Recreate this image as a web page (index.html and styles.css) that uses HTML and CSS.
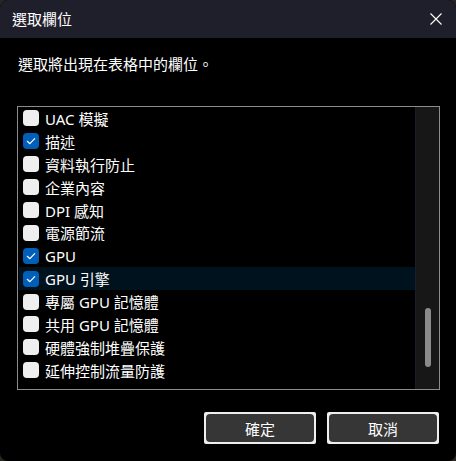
FILE: index.html
```html
<!DOCTYPE html>
<html lang="zh-Hant">

<head>
  <meta charset="UTF-8" />
  <title>選取欄位</title>
  <link rel="stylesheet" href="styles.css">
</head>

<body>
  <div class="dialog">
    <div class="titlebar">
      <span class="title">選取欄位</span>
      <svg class="close" width="12" height="12" viewBox="0 0 12 12">
        <path d="M0.5 0.5 L11.5 11.5 M11.5 0.5 L0.5 11.5" stroke="#ffffff" stroke-width="1.1" fill="none" />
      </svg>
    </div>

    <p class="desc">選取將出現在表格中的欄位。</p>

    <div class="list">
      <ul class="rows">
        <li class="row"><span class="box"></span>UAC 模擬</li>
        <li class="row"><span class="box checked"></span>描述</li>
        <li class="row"><span class="box"></span>資料執行防止</li>
        <li class="row"><span class="box"></span>企業內容</li>
        <li class="row"><span class="box"></span>DPI 感知</li>
        <li class="row"><span class="box"></span>電源節流</li>
        <li class="row"><span class="box checked"></span>GPU</li>
        <li class="row selected"><span class="box checked"></span>GPU 引擎</li>
        <li class="row"><span class="box"></span>專屬 GPU 記憶體</li>
        <li class="row"><span class="box"></span>共用 GPU 記憶體</li>
        <li class="row"><span class="box"></span>硬體強制堆疊保護</li>
        <li class="row"><span class="box"></span>延伸控制流量防護</li>
      </ul>
      <div class="scrollbar">
        <div class="thumb"></div>
      </div>
    </div>

    <div class="actions">
      <button class="btn" type="button"><span>確定</span></button>
      <button class="btn" type="button"><span>取消</span></button>
    </div>
  </div>

  <script>
    // draw the check mark into every checked box
    document.querySelectorAll('.box.checked').forEach(box => {
      box.innerHTML = '<svg width="16" height="16" viewBox="0 0 16 16"><path d="M4.3 8.3 L6.9 10.7 L11.7 5.6" stroke="#fff" stroke-width="1.2" fill="none" stroke-linecap="round" stroke-linejoin="round"/></svg>';
    });
  </script>
</body>

</html>
```

FILE: styles.css
```css
body {
  margin: 0;
  background-color: #2a2622;
  font-family: "Noto Sans", "Noto Sans CJK TC", sans-serif;
  color: #ffffff;
}

.dialog {
  width: 456px;
  height: 461px;
  background-color: #000;
  border-radius: 8px;
  overflow: hidden;
}

.titlebar {
  height: 38px;
  background-color: #1f1e2b;
  display: flex;
  justify-content: space-between;
  align-items: center;
  padding: 0 14px 0 12px;
}

.title {
  font-size: 15px;
  line-height: 20px;
}

.close {
  display: block;
}

.desc {
  margin: 16px 18px 0;
  font-size: 15px;
  line-height: 21px;
}

.list {
  margin: 31px 0 0 17px;
  width: 421px;
  height: 282px;
  border: 1px solid #8c8c8c;
  display: flex;
}

.rows {
  list-style: none;
  margin: 0;
  padding: 0 0 0 1px;
  flex: 1;
  overflow: hidden;
}

.row {
  height: 22.9px;
  display: flex;
  align-items: center;
  padding-left: 4px;
  font-size: 15px;
  white-space: nowrap;
}

.row.selected {
  background-color: #01121f;
}

.box {
  width: 16px;
  height: 16px;
  border-radius: 4px;
  background-color: #efefef;
  margin-right: 6px;
  flex-shrink: 0;
}

.box.checked {
  background-color: #005fb8;
}

.box svg {
  display: block;
}

.scrollbar {
  width: 23px;
  border-left: 1px solid #1c1d2c;
  background-color: #171717;
}

.thumb {
  width: 6px;
  height: 59px;
  margin: 201px 0 0 9px;
  border-radius: 3px;
  background-color: #8b8b8b;
}

.actions {
  display: flex;
  justify-content: flex-end;
  gap: 11px;
  margin-top: 22px;
  padding-right: 17px;
}

.btn {
  width: 112px;
  height: 32px;
  padding: 2px;
  border: none;
  border-radius: 2px;
  background-color: #efefef;
  font-family: inherit;
  cursor: pointer;
}

.btn span {
  display: flex;
  height: 100%;
  align-items: center;
  justify-content: center;
  border-radius: 4px;
  background-color: #363636;
  color: #ffffff;
  font-size: 15px;
}
```
